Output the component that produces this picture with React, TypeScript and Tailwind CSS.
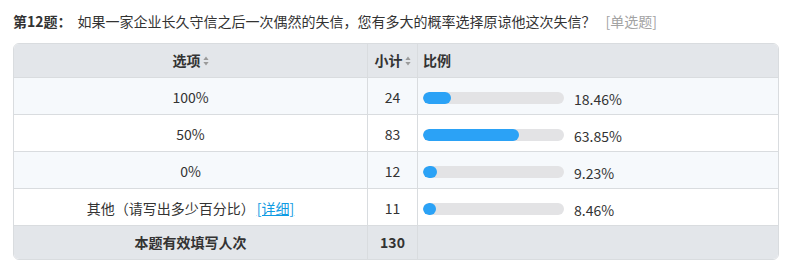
import React from "react";

type Row = {
  label: string;
  count: number;
  pct: string;
  fill: number;
  link?: boolean;
};

const rows: Row[] = [
  { label: "100%", count: 24, pct: "18.46%", fill: 28 },
  { label: "50%", count: 83, pct: "63.85%", fill: 96 },
  { label: "0%", count: 12, pct: "9.23%", fill: 14 },
  { label: "其他（请写出多少百分比）", count: 11, pct: "8.46%", fill: 13, link: true },
];

function SortIcon() {
  return (
    <svg width="6" height="10" viewBox="0 0 6 10" className="ml-[2px] inline-block">
      <path d="M3 0.5 L5.6 4 H0.4 Z" fill="#9a9a9a" />
      <path d="M3 9.5 L5.6 6 H0.4 Z" fill="#9a9a9a" />
    </svg>
  );
}

export default function App() {
  return (
    <div
      className="w-[791px] h-[275px] bg-white text-[#333]"
      style={{ fontFamily: '"Microsoft YaHei", "Noto Sans CJK SC", "Noto Sans", sans-serif' }}
    >
      {/* TITLE */}
      <div className="pl-[13px] pt-[11px] h-[43px] text-[14px] leading-[20px] flex items-start">
        <span className="font-bold text-[#333]">第12题：</span>
        <span className="ml-[6px] text-[#333]">如果一家企业长久守信之后一次偶然的失信，您有多大的概率选择原谅他这次失信？</span>
        <span className="ml-[10px] text-[#a3a3a3]">[单选题]</span>
      </div>

      {/* TABLE */}
      <div className="ml-[13px] w-[766px] border border-[#d9dcdf] rounded-[6px] overflow-hidden">
        {/* HEADER */}
        <div className="grid grid-cols-[354px_50px_1fr] h-[34px] bg-[#e3e6ea] text-[14px] font-bold border-b border-[#d9dcdf]">
          <div className="flex items-center justify-center border-r border-[#d9dcdf]">
            选项
            <SortIcon />
          </div>
          <div className="flex items-center justify-center border-r border-[#d9dcdf]">
            小计
            <SortIcon />
          </div>
          <div className="flex items-center pl-[5px]">比例</div>
        </div>

        {/* ROWS */}
        {rows.map((r, i) => (
          <div
            key={r.label}
            className={`grid grid-cols-[354px_50px_1fr] h-[37px] border-b border-[#d9dcdf] ${
              i % 2 === 0 ? "bg-[#f6f9fc]" : "bg-white"
            }`}
          >
            <div className="flex items-center justify-center border-r border-[#d9dcdf] text-[14px] pt-[3px]">
              {r.label}
              {r.link && (
                <a href="#" className="ml-[2px] text-[#0f9be3] underline">
                  [详细]
                </a>
              )}
            </div>
            <div className="flex items-center justify-center border-r border-[#d9dcdf] text-[14px] pt-[3px]">
              {r.count}
            </div>
            <div className="flex items-center pl-[5px] pt-[4px]">
              <div className="w-[141px] h-[12px] rounded-full bg-[#e3e3e5] overflow-hidden">
                <div className="h-full rounded-full bg-[#2ba2f6]" style={{ width: r.fill }} />
              </div>
              <span className="ml-[10px] text-[14px] pt-[2px]">{r.pct}</span>
            </div>
          </div>
        ))}

        {/* FOOTER */}
        <div className="grid grid-cols-[354px_50px_1fr] h-[33px] bg-[#e3e6ea] text-[14px] font-bold">
          <div className="flex items-center justify-center border-r border-[#d9dcdf]">本题有效填写人次</div>
          <div className="flex items-center justify-center border-r border-[#d9dcdf]">130</div>
          <div />
        </div>
      </div>
    </div>
  );
}
